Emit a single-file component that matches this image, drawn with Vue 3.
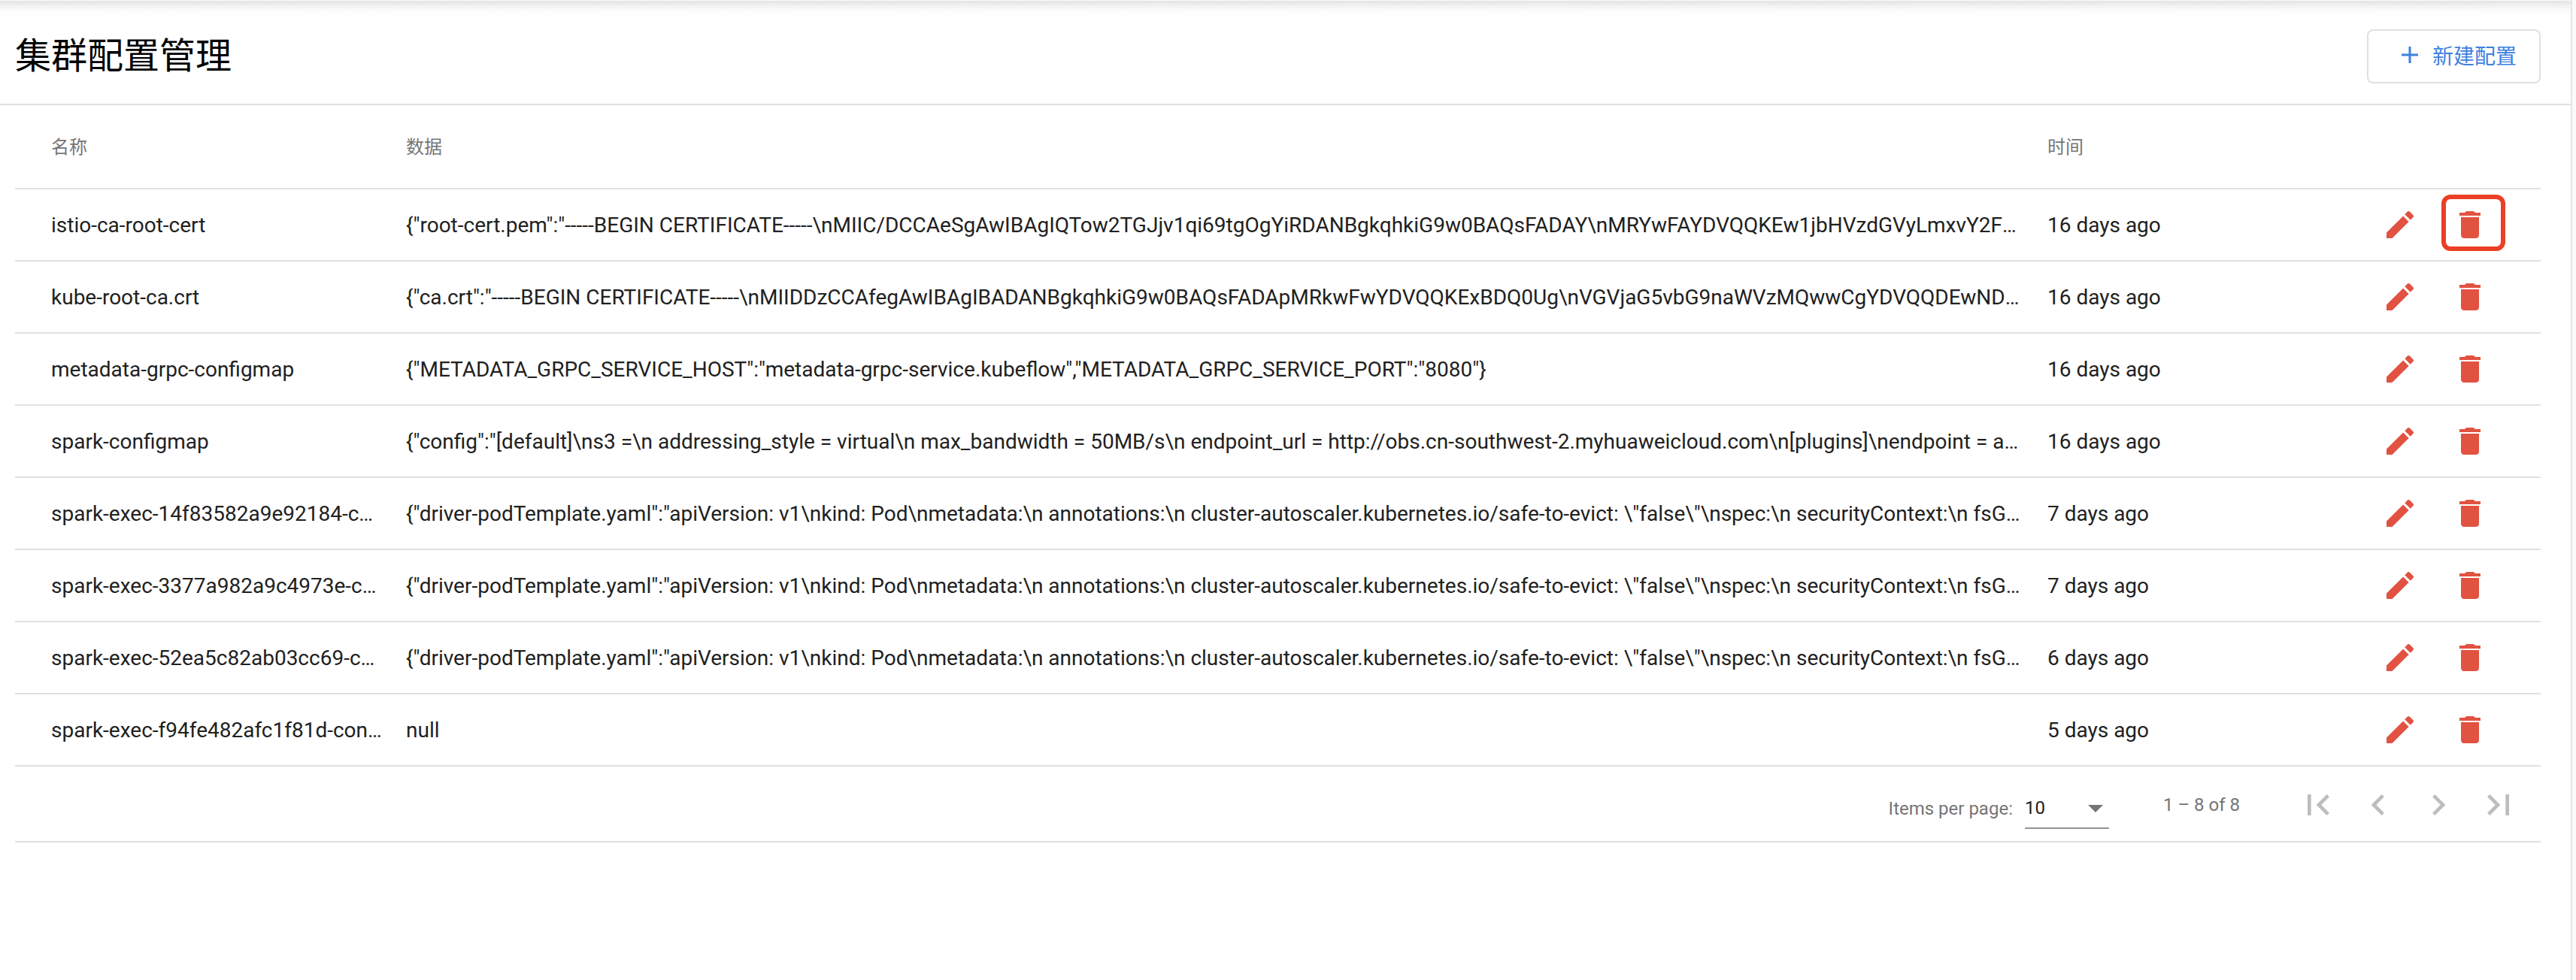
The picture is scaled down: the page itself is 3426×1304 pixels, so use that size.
<script setup>
import { ref } from 'vue'

const pageSize = ref('10')

const podTemplate = String.raw`{"driver-podTemplate.yaml":"apiVersion: v1\nkind: Pod\nmetadata:\n annotations:\n cluster-autoscaler.kubernetes.io/safe-to-evict: \"false\"\nspec:\n securityContext:\n fsGroup`

const configs = ref([
  {
    name: 'istio-ca-root-cert',
    data: String.raw`{"root-cert.pem":"-----BEGIN CERTIFICATE-----\nMIIC/DCCAeSgAwIBAgIQTow2TGJjv1qi69tgOgYiRDANBgkqhkiG9w0BAQsFADAY\nMRYwFAYDVQQKEw1jbHVzdGVyLmxvY2FsMB`,
    time: '16 days ago',
    marked: true
  },
  {
    name: 'kube-root-ca.crt',
    data: String.raw`{"ca.crt":"-----BEGIN CERTIFICATE-----\nMIIDDzCCAfegAwIBAgIBADANBgkqhkiG9w0BAQsFADApMRkwFwYDVQQKExBDQ0Ug\nVGVjaG5vbG9naWVzMQwwCgYDVQQDEwNDQ0`,
    time: '16 days ago'
  },
  {
    name: 'metadata-grpc-configmap',
    data: '{"METADATA_GRPC_SERVICE_HOST":"metadata-grpc-service.kubeflow","METADATA_GRPC_SERVICE_PORT":"8080"}',
    time: '16 days ago'
  },
  {
    name: 'spark-configmap',
    data: String.raw`{"config":"[default]\ns3 =\n addressing_style = virtual\n max_bandwidth = 50MB/s\n endpoint_url = http://obs.cn-southwest-2.myhuaweicloud.com\n[plugins]\nendpoint = aws`,
    time: '16 days ago'
  },
  { name: 'spark-exec-14f83582a9e92184-conf', data: podTemplate, time: '7 days ago' },
  { name: 'spark-exec-3377a982a9c4973e-conf', data: podTemplate, time: '7 days ago' },
  { name: 'spark-exec-52ea5c82ab03cc69-conf', data: podTemplate, time: '6 days ago' },
  { name: 'spark-exec-f94fe482afc1f81d-config', data: 'null', time: '5 days ago' }
])

const pagerButtons = [
  { label: 'First page', path: 'M18.41 16.59L13.82 12l4.59-4.59L17 6l-6 6 6 6zM6 6h2v12H6z' },
  { label: 'Previous page', path: 'M15.41 7.41L14 6l-6 6 6 6 1.41-1.41L10.83 12z' },
  { label: 'Next page', path: 'M10 6L8.59 7.41 13.17 12l-4.58 4.59L10 18l6-6z' },
  { label: 'Last page', path: 'M5.59 7.41L10.18 12l-4.59 4.59L7 18l6-6-6-6zM16 6h2v12h-2z' }
]

function removeConfig(name) {
  configs.value = configs.value.filter(c => c.name !== name)
}
</script>

<template>
  <div class="page">
    <header class="header">
      <h1>集群配置管理</h1>
      <button class="create">
        <svg class="plus" viewBox="0 0 24 24"><path d="M10.5 1h3v9.5H23v3h-9.5V23h-3v-9.5H1v-3h9.5z" /></svg>
        <span>新建配置</span>
      </button>
    </header>
    <main class="content">
      <table>
        <thead>
          <tr>
            <th class="name">名称</th>
            <th>数据</th>
            <th class="time">时间</th>
            <th class="actions"></th>
          </tr>
        </thead>
        <tbody>
          <tr v-for="c in configs" :key="c.name">
            <td class="name">{{ c.name }}</td>
            <td>{{ c.data }}</td>
            <td class="time">{{ c.time }}</td>
            <td class="actions">
              <div class="buttons">
                <button class="icon-button" aria-label="编辑">
                  <svg viewBox="0 0 24 24">
                    <path d="M3 17.25V21h3.75L17.81 9.94l-3.75-3.75L3 17.25zM20.71 7.04c.39-.39.39-1.02 0-1.41l-2.34-2.34c-.39-.39-1.02-.39-1.41 0l-1.83 1.83 3.75 3.75 1.83-1.83z" />
                  </svg>
                </button>
                <button class="icon-button" aria-label="删除" @click="removeConfig(c.name)">
                  <svg viewBox="0 0 24 24">
                    <path d="M6 19c0 1.1.9 2 2 2h8c1.1 0 2-.9 2-2V7H6v12zM19 4h-3.5l-.71-.71c-.18-.18-.44-.29-.7-.29H9.91c-.26 0-.52.11-.7.29L8.5 4H5v2h14V4z" />
                  </svg>
                  <span v-if="c.marked" class="mark"></span>
                </button>
              </div>
            </td>
          </tr>
        </tbody>
      </table>
      <div class="paginator">
        <label for="page-size">Items per page:</label>
        <div class="select">
          <select id="page-size" v-model="pageSize">
            <option>5</option>
            <option>10</option>
            <option>20</option>
          </select>
          <svg class="caret" viewBox="0 0 20 10"><path d="M0 0h20L10 10z" /></svg>
        </div>
        <span class="range">1 – 8 of 8</span>
        <button v-for="b in pagerButtons" :key="b.label" class="pager" :aria-label="b.label" disabled>
          <svg viewBox="0 0 24 24"><path :d="b.path" /></svg>
        </button>
      </div>
    </main>
  </div>
</template>

<style>
body {
  background: #fafafa;
}
</style>

<style scoped>
.page {
  box-sizing: border-box;
  min-height: 100vh;
  margin-right: 5px;
  border-right: 2px solid #e4e5e7;
  background: #fff;
  color: #212121;
  font-family: Roboto, "Noto Sans CJK SC", sans-serif;
  font-size: 28px;
}

button {
  padding: 0;
  border: none;
  background: none;
  font-family: inherit;
  cursor: pointer;
}

svg {
  display: block;
  fill: currentColor;
}

.header {
  box-sizing: border-box;
  display: flex;
  align-items: center;
  justify-content: space-between;
  height: 140px;
  padding: 12px 40px 0 20px;
  border-bottom: 2px solid #e0e0e0;
  /* shadow falling from the toolbar above */
  background: linear-gradient(#fafafa 1px, #e3e4e6 1px, #e8e9eb 4px, #f5f5f6 9px, #fcfcfc 15px, #fff 24px);
}

h1 {
  margin: 0;
  color: #000;
  font-size: 48px;
  font-weight: 400;
  line-height: 64px;
}

.create {
  box-sizing: border-box;
  display: flex;
  align-items: center;
  gap: 18px;
  height: 72px;
  padding: 0 30px 4px 43px;
  border: 2px solid #e0e0e0;
  border-radius: 8px;
  color: #3c80df;
  font-size: 28px;
  font-weight: 400;
}

.plus {
  width: 24px;
  height: 24px;
}

.content {
  padding: 0 40px 0 20px;
}

table {
  width: 100%;
  table-layout: fixed;
  border-collapse: separate;
  border-spacing: 0;
}

th,
td {
  box-sizing: border-box;
  height: 96px;
  padding: 0 32px 0 0;
  border-bottom: 2px solid #e0e0e0;
  overflow: hidden;
  text-align: left;
  text-overflow: ellipsis;
  white-space: nowrap;
}

th {
  height: 112px;
  padding-bottom: 4px;
  color: #757575;
  font-size: 24px;
  font-weight: 400;
}

.name {
  width: 520px;
  padding-left: 48px;
}

.time {
  width: 400px;
}

.actions {
  width: 256px;
  padding-right: 54px;
  overflow: visible;
}

.buttons {
  display: flex;
  justify-content: flex-end;
  gap: 13px;
}

.icon-button {
  position: relative;
  display: flex;
  align-items: center;
  justify-content: center;
  width: 80px;
  height: 80px;
  color: #e25241;
}

.icon-button svg {
  width: 48px;
  height: 48px;
}

.mark {
  position: absolute;
  top: 0;
  left: 2px;
  box-sizing: border-box;
  width: 85px;
  height: 75px;
  border: 6px solid #eb4025;
  border-radius: 12px;
}

.paginator {
  box-sizing: border-box;
  display: flex;
  align-items: center;
  justify-content: flex-end;
  height: 101px;
  padding: 2px 16px 0 0;
  border-bottom: 2px solid #e0e0e0;
  color: #757575;
  font-size: 24px;
}

label {
  padding-top: 10px;
}

.select {
  position: relative;
  width: 112px;
  margin: 10px 72px 0 16px;
  border-bottom: 2px solid #949494;
}

select {
  width: 100%;
  height: 52px;
  padding: 0;
  border: none;
  appearance: none;
  background: none;
  color: #212121;
  font-family: inherit;
  font-size: 24px;
}

.caret {
  position: absolute;
  top: 22px;
  right: 8px;
  width: 20px;
  height: 10px;
  pointer-events: none;
}

.range {
  margin-right: 64px;
}

.pager {
  display: flex;
  align-items: center;
  justify-content: center;
  width: 80px;
  height: 80px;
  color: #bdbdbd;
  cursor: default;
}

.pager svg {
  width: 56px;
  height: 56px;
}
</style>
